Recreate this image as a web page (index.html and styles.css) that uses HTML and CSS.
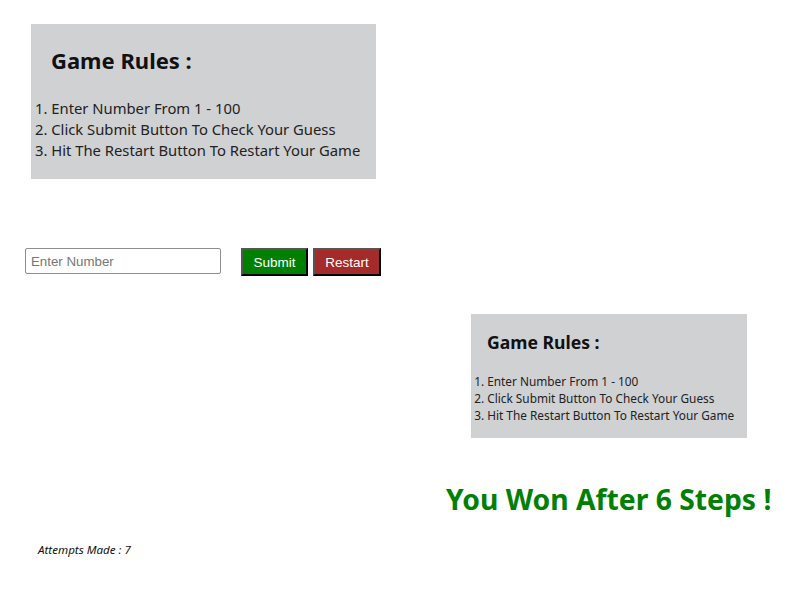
FILE: index.html
```html
<!DOCTYPE html>
<html>
<head>
<meta charset="utf-8">
<title>Guess Game</title>
<link rel="stylesheet" href="styles.css">
</head>
<body>
<div class="rules">
  <h2 class="rules-title">Game Rules :</h2>
  <ol class="rules-list">
    <li>Enter Number From 1 - 100</li>
    <li>Click Submit Button To Check Your Guess</li>
    <li>Hit The Restart Button To Restart Your Game</li>
  </ol>
</div>

<div class="controls">
  <input class="guess" type="text" placeholder="Enter Number">
  <button class="btn btn-submit">Submit</button>
  <button class="btn btn-restart">Restart</button>
</div>

<div class="rules rules-small">
  <h2 class="rules-title">Game Rules :</h2>
  <ol class="rules-list">
    <li>Enter Number From 1 - 100</li>
    <li>Click Submit Button To Check Your Guess</li>
    <li>Hit The Restart Button To Restart Your Game</li>
  </ol>
</div>

<p class="result">You Won After 6 Steps !</p>
<p class="attempts">Attempts Made : 7</p>
</body>
</html>
```

FILE: styles.css
```css
html, body {
  margin: 0;
  padding: 0;
  background: #ffffff;
}

body {
  font-family: "Noto Sans", "Open Sans", sans-serif;
  color: #1a1a1a;
  padding-top: 24px;
}

.rules {
  font-size: 16px;
  background: #d0d1d3;
  width: 21.56em;
  height: 9.6875em;
  margin-left: 31px;
  padding-top: 1.25em;
  box-sizing: border-box;
  white-space: nowrap;
}

.rules-title {
  font-size: 1.375em;
  line-height: 1.4545em;
  font-weight: 700;
  margin: 0 0 0 0.909em;
  color: #111;
}

.rules-list {
  font-size: 0.925em;
  list-style-position: inside;
  margin: 1.486em 0 0 0.27em;
  padding: 0;
  line-height: 1.419em;
  color: #222;
}

.controls {
  display: flex;
  align-items: flex-start;
  margin: 69px 0 0 25px;
  height: 28px;
}

.guess {
  width: 196px;
  height: 26px;
  box-sizing: border-box;
  border: 1px solid #8f8f8f;
  border-radius: 2px;
  padding: 0 5px;
  font-family: "Liberation Sans", Arial, sans-serif;
  font-size: 13.3px;
  margin-right: 20px;
}

.guess::placeholder {
  color: #777;
}

.btn {
  height: 28px;
  box-sizing: border-box;
  border: 2px outset #555;
  color: #fff;
  font-family: "Liberation Sans", Arial, sans-serif;
  font-size: 13.5px;
  padding: 0 10px;
}

.btn-submit {
  background: #008000;
  width: 67px;
  margin-right: 5px;
}

.btn-restart {
  background: #a52a2a;
  width: 68px;
}

.rules-small {
  font-size: 12.8px;
  margin-left: 471px;
  margin-top: 38px;
}

.result {
  margin: 45px 0 0 446px;
  font-size: 28.3px;
  line-height: 32px;
  font-weight: 700;
  color: #008000;
}

.attempts {
  margin: 27px 0 0 38px;
  font-size: 11.6px;
  font-style: italic;
  color: #111;
}
```
